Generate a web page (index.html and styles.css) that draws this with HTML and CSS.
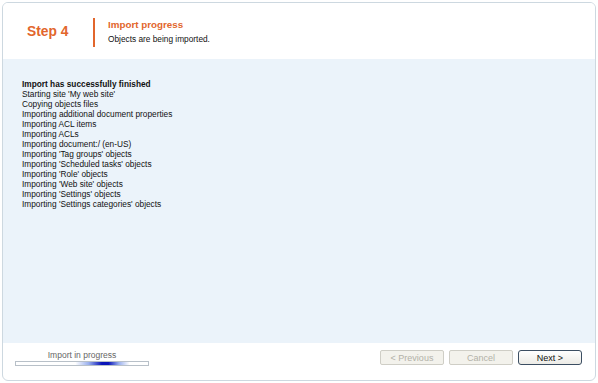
FILE: index.html
```html
<!DOCTYPE html>
<html lang="en">
<head>
  <meta charset="UTF-8" />
  <title>Import site – Step 4</title>
  <link rel="stylesheet" href="styles.css">
</head>
<body>
  <div class="wizard">
    <div class="header">
      <div class="step">Step 4</div>
      <div class="step-info">
        <div class="step-title">Import progress</div>
        <div class="step-desc">Objects are being imported.</div>
      </div>
    </div>
    <div class="content">
      <div class="log">
        <div class="log-done">Import has successfully finished</div>
        <div>Starting site 'My web site'</div>
        <div>Copying objects files</div>
        <div>Importing additional document properties</div>
        <div>Importing ACL items</div>
        <div>Importing ACLs</div>
        <div>Importing document:/ (en-US)</div>
        <div>Importing 'Tag groups' objects</div>
        <div>Importing 'Scheduled tasks' objects</div>
        <div>Importing 'Role' objects</div>
        <div>Importing 'Web site' objects</div>
        <div>Importing 'Settings' objects</div>
        <div>Importing 'Settings categories' objects</div>
      </div>
    </div>
    <div class="footer">
      <div class="progress">
        <div class="progress-label">Import in progress</div>
        <div class="progress-bar"></div>
      </div>
      <div class="buttons">
        <button class="btn" disabled>&lt; Previous</button>
        <button class="btn" disabled>Cancel</button>
        <button class="btn btn-next">Next &gt;</button>
      </div>
    </div>
  </div>
</body>
</html>
```

FILE: styles.css
```css
body {
  margin: 0;
  padding: 2px;
  background: #fff;
  font-family: 'Liberation Sans', Arial, sans-serif;
}
.wizard {
  width: 592px;
  height: 377px;
  border: 1px solid #cdd8e0;
  border-radius: 6px;
  display: flex;
  flex-direction: column;
  overflow: hidden;
}
.header {
  height: 56px;
  display: flex;
  align-items: center;
  background: #fff;
}
.step {
  width: 90px;
  padding-left: 24px;
  box-sizing: border-box;
  font-weight: bold;
  font-size: 13.8px;
  color: #e2662c;
}
.step-info {
  border-left: 2px solid #e2662c;
  height: 29px;
  padding-left: 13px;
  margin-top: 2px;
}
.step-title {
  font-size: 9.8px;
  font-weight: bold;
  color: #e2662c;
  margin-top: 1px;
}
.step-desc {
  font-size: 8.3px;
  color: #111;
  margin-top: 4px;
}
.content {
  flex: 1;
  background: #ebf3fa;
  padding: 20px 19px;
}
.log {
  font-size: 8.3px;
  line-height: 10px;
  color: #111;
}
.log-done {
  font-weight: bold;
}
.footer {
  height: 37px;
  display: flex;
  align-items: flex-start;
  justify-content: space-between;
  padding: 7px 13px 0 12px;
  box-sizing: border-box;
}
.progress {
  width: 134px;
  text-align: center;
}
.progress-label {
  font-size: 8.5px;
  color: #666;
  line-height: 11px;
}
.progress-bar {
  height: 3px;
  border: 1px solid #b8c0c8;
  background: linear-gradient(to right, #fff 45%, #9ab0ee 55%, #0a14b8 65%, #0a14b8 70%, #9ab0ee 78%, #fff 86%);
}
.buttons {
  display: flex;
  gap: 5px;
}
.btn {
  width: 64px;
  height: 15px;
  padding: 0;
  font-family: 'Liberation Sans', Arial, sans-serif;
  font-size: 9px;
  border: 1px solid #cfcec6;
  border-radius: 2px;
  background: #f3f2ec;
  color: #b2b1a8;
}
.btn-next {
  border: 1px solid #3c4e62;
  border-radius: 3px;
  background: linear-gradient(#fff, #ecebe6);
  color: #111;
}
```
